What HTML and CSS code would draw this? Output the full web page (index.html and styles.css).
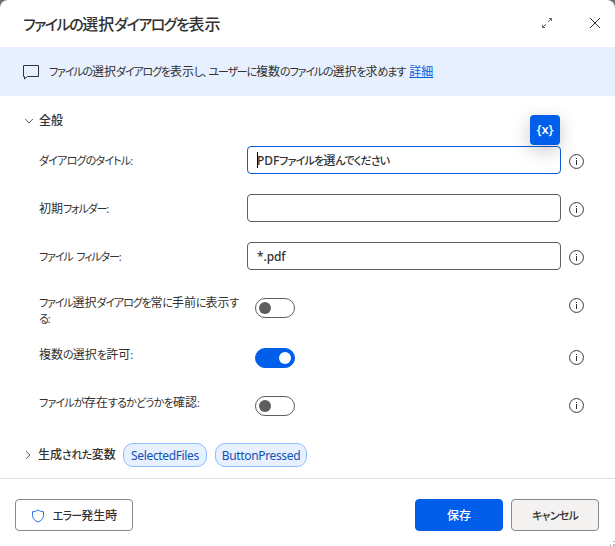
FILE: index.html
```html
<!DOCTYPE html>
<html lang="ja">
<head>
<meta charset="utf-8">
<title>ファイルの選択ダイアログを表示</title>
<link rel="stylesheet" href="styles.css">
</head>
<body>
<svg class="defs" width="0" height="0"><symbol id="info" viewBox="0 0 15 15"><circle cx="7.5" cy="7.5" r="6.950" fill="none" stroke="#3b3a39" stroke-width="1"/><path d="M7 4h1v1H7zM7 6h1v5H7z" fill="#323130" stroke="none"/></symbol></svg>
<main class="dialog">
  <header class="header">
    <h1 class="title"><span class="k">ファイルの</span>選択<span class="k">ダイアログを</span>表示</h1>
    <svg class="expand" width="12" height="12" viewBox="0 0 12 12"><path d="M7 5l3-3M8 1.500h2.500v2.500M5 7l-3 3M1.500 8v2.500h2.500"/></svg>
    <svg class="close" width="12" height="12" viewBox="0 0 12 12"><path d="M1 1l10 10M11 1L1 11"/></svg>
  </header>
  <section class="banner">
    <svg width="18" height="16" viewBox="0 0 18 16"><path d="M1.5 1.5h15v11h-11L2.5 15v-2.500h-1z"/></svg>
    <p class="description"><span class="k">ファイルの</span>選択<span class="k">ダイアログを</span>表示<span class="k">し<span class="comma">、</span>ユーザーに</span>複数<span class="k">のファイルの</span>選択<span class="k">を</span>求<span class="k">めます</span> <a href="#">詳細</a></p>
  </section>
  <section class="body">
    <h2 class="group"><svg width="10" height="10" viewBox="0 0 10 10"><path d="M1.200 3l3.800 4 3.800-4"/></svg>全般</h2>
    <div class="row">
      <label class="label loose"><span class="k">ダイアログのタイトル:</span></label>
      <div class="input focused loose"><span class="caret"></span><span class="latin">PDF</span><span class="k">ファイルを</span>選<span class="k">んでください</span><span class="variable">{x}</span></div>
      <svg class="info"><use href="#info"/></svg>
    </div>
    <div class="row">
      <label class="label">初期<span class="k">フォルダー:</span></label>
      <div class="input"></div>
      <svg class="info"><use href="#info"/></svg>
    </div>
    <div class="row">
      <label class="label"><span class="k spaced">ファイル フィルター:</span></label>
      <div class="input latin">*.pdf</div>
      <svg class="info"><use href="#info"/></svg>
    </div>
    <div class="row tall">
      <label class="label"><span class="k">ファイル</span>選択<span class="k">ダイアログを</span>常<span class="k">に</span>手前<span class="k">に</span>表示<span class="k">す<br>る:</span></label>
      <div class="toggle"></div>
      <svg class="info"><use href="#info"/></svg>
    </div>
    <div class="row switch">
      <label class="label loose">複数<span class="k">の</span>選択<span class="k">を</span>許可<span class="k">:</span></label>
      <div class="toggle on"></div>
      <svg class="info"><use href="#info"/></svg>
    </div>
    <div class="row switch">
      <label class="label loose"><span class="k">ファイルが</span>存在<span class="k">するかどうかを</span>確認<span class="k">:</span></label>
      <div class="toggle"></div>
      <svg class="info"><use href="#info"/></svg>
    </div>
    <div class="variables">
      <svg width="10" height="10" viewBox="0 0 10 10"><path d="M3 1.200l4 3.800-4 3.800"/></svg>
      <h2 class="loose">生成<span class="k">された</span>変数</h2>
      <span class="pill selected">SelectedFiles</span><span class="pill pressed">ButtonPressed</span>
    </div>
  </section>
  <footer class="footer">
    <button class="button error loose"><svg width="14" height="14" viewBox="0 0 14 14"><path d="M7 1C5.500 2.100 3.500 2.600 1.500 2.700V6.500c0 3.100 2.300 5.200 5.500 6.500 3.200-1.300 5.500-3.400 5.500-6.500V2.700C10.500 2.600 8.500 2.100 7 1z"/></svg><span><span class="k">エラー</span>発生時</span></button>
    <button class="button save">保存</button>
    <button class="button cancel loose"><span class="k">キャンセル</span></button>
    <svg class="grip" width="6" height="6" viewBox="0 0 6 6"><path d="M4 1h2v1H4zM1 4h1v2H1zM4 4h2v2H4z"/></svg>
  </footer>
</main>
</body>
</html>
```
FILE: styles.css
```css
* { box-sizing: border-box; }
body { margin: 0; background: #6f7175; font: 12px/16px "Open Sans", "Noto Sans CJK JP", sans-serif; color: #323130; }
h1, h2, p { margin: 0; }
svg { fill: none; stroke: #323130; stroke-width: 1; flex: none; }
.defs { position: absolute; }
.k { font-feature-settings: "palt"; font-size: 11px; letter-spacing: -1.15px; }
.loose .k { letter-spacing: -.8px; }
.spaced { word-spacing: 2px; }
.comma { margin-right: 2px; }
.dialog { width: 615px; height: 546px; background: #fff; border-radius: 8px 8px 0 0; display: flex; flex-direction: column; overflow: hidden; position: relative; }
.header { height: 47px; display: flex; align-items: center; padding: 0 14px 1px 23px; }
.title { font-size: 16px; line-height: 22px; font-weight: 500; flex: 1; white-space: nowrap; padding-top: 1px; }
.title .k { font-size: 15px; letter-spacing: -1.45px; }
.expand { margin-right: 36px; stroke-width: .75; }
.banner { height: 49px; background: #e6f0ff; display: flex; align-items: center; padding-left: 22px; }
.description { margin-left: 9px; white-space: nowrap; padding-top: 1px; }
.description a { color: #0b5cde; margin-left: 1px; }
.body { height: 382px; padding-top: 17px; }
.group { font-size: 12px; line-height: 16px; font-weight: 500; display: flex; align-items: center; gap: 5px; padding-left: 24px; margin-bottom: 13px; }
.group svg, .variables svg { stroke-width: .8; }
.row { display: grid; grid-template-columns: 200px 314px 15px; column-gap: 8px; height: 48px; padding: 4px 0 0 39px; }
.label { padding-top: 7px; white-space: nowrap; }
.input { position: relative; height: 28px; border: 1px solid #605e5c; border-radius: 4px; padding: 0 9px; line-height: 27px; font-weight: 500; white-space: nowrap; }
.focused { border-color: #0b5cde; }
.latin { font-family: "Noto Sans", sans-serif; font-weight: 500; letter-spacing: -.1px; }
.input.latin { line-height: 28px; }
.caret { position: absolute; left: 9px; top: 5px; width: 1px; height: 16px; background: #000; }
.variable { position: absolute; right: 0; top: -32px; width: 30px; height: 30px; border-radius: 4px; background: #005eea; color: #fff; font-size: 13px; font-weight: 600; line-height: 28px; text-align: center; box-shadow: 0 5px 18px rgba(0,0,0,.22); }
.info { width: 15px; height: 15px; margin-top: 8px; }
.tall { height: 52px; }
.tall .label { padding-top: 5px; }
.toggle { width: 40px; height: 20px; border: 1px solid #605e5c; border-radius: 10px; margin: 8px 0 0 8px; padding: 3px; }
.toggle::before { content: ""; display: block; width: 12px; height: 12px; border-radius: 50%; background: #605e5c; }
.switch .label { padding-top: 5px; }
.switch .toggle { margin-top: 6px; }
.toggle.on { background: #005eea; border-color: #005eea; }
.toggle.on::before { background: #fff; margin-left: 20px; }
.variables { display: flex; align-items: center; height: 24px; margin-top: 9px; padding-left: 23px; }
.variables h2 { font-size: 12px; font-weight: 500; margin-left: 5px; width: 85px; white-space: nowrap; }
.variables .k { letter-spacing: -.5px; }
.pill { height: 24px; border: 1px solid #8bbcff; border-radius: 10px; background: #e6f0ff; color: #1450b4; font-family: "Noto Sans", sans-serif; line-height: 23px; font-size: 12px; letter-spacing: -.35px; text-align: center; }
.selected { width: 84px; margin-right: 8px; }
.pressed { width: 92px; }
.footer { flex: 1; border-top: 1px solid #e1e1e1; display: flex; padding: 20px 16px 0 15px; }
.button { height: 32px; padding: 1px 0 0; border: 1px solid #8a8886; border-radius: 4px; background: #fff; color: #323130; font: 500 12px/16px "Open Sans", "Noto Sans CJK JP", sans-serif; }
.error { width: 118px; display: flex; justify-content: center; align-items: center; gap: 8px; }
.error svg { stroke: #2672e8; }
.save { width: 88px; margin-left: auto; margin-right: 8px; background: #005eea; border-color: #005eea; color: #fff; }
.cancel { width: 88px; background: #f3f2f1; }
.grip { position: absolute; right: 0; bottom: 0; fill: #b6bac5; stroke: none; }
```
